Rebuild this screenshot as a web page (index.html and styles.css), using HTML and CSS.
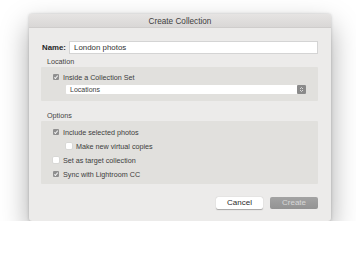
FILE: index.html
```html
<!DOCTYPE html>
<html>
<head>
<meta charset="utf-8">
<link rel="stylesheet" href="styles.css">
</head>
<body>
<div class="dialog">
  <div class="titlebar">Create Collection</div>
  <div class="content">
    <div class="name-row">
      <span class="name-label">Name:</span>
      <div class="text-input">London photos</div>
    </div>
    <div class="section-label loc-label">Location</div>
    <div class="box loc-box">
      <div class="check-row"><span class="cb checked"></span><span>Inside a Collection Set</span></div>
      <div class="select">
        <span class="select-text">Locations</span>
        <span class="stepper">
          <svg width="5" height="7" viewBox="0 0 5 7"><path d="M1 3 L2.5 1.5 L4 3 M1 4 L2.5 5.5 L4 4" fill="none" stroke="#eee" stroke-width="0.8"/></svg>
        </span>
      </div>
    </div>
    <div class="section-label opt-label">Options</div>
    <div class="box opt-box">
      <div class="check-row"><span class="cb checked"></span><span>Include selected photos</span></div>
      <div class="check-row indent"><span class="cb"></span><span>Make new virtual copies</span></div>
      <div class="check-row"><span class="cb"></span><span>Set as target collection</span></div>
      <div class="check-row"><span class="cb checked"></span><span>Sync with Lightroom CC</span></div>
    </div>
    <div class="buttons">
      <div class="btn cancel">Cancel</div>
      <div class="btn create">Create</div>
    </div>
  </div>
</div>
</body>
</html>
```
FILE: styles.css
```css
html, body {
  margin: 0;
  padding: 0;
  background: #ffffff;
}
body {
  font-family: "Liberation Sans", Arial, sans-serif;
  color: #3c3c3c;
  padding-top: 14px;
  padding-left: 29px;
}
.dialog {
  width: 302px;
  background: #ecebea;
  border-radius: 3px;
  box-shadow: 0 12px 28px rgba(0,0,0,0.34), 0 0 3px rgba(0,0,0,0.22);
  overflow: hidden;
}
.titlebar {
  height: 14px;
  line-height: 15px;
  text-align: center;
  font-size: 8.2px;
  color: #404040;
  background: linear-gradient(#e6e4e3, #d9d7d6);
  border-bottom: 1px solid #cfcdcc;
  box-sizing: border-box;
}
.content {
  padding: 13px 13px 12px 12px;
  font-size: 7.2px;
}
.name-row {
  display: flex;
  align-items: center;
  height: 13px;
}
.name-label {
  font-weight: bold;
  font-size: 7.8px;
  color: #262626;
  width: 27px;
  padding-left: 1px;
}
.text-input {
  flex: 1;
  height: 13px;
  box-sizing: border-box;
  background: #fff;
  border: 1px solid #d4d4d4;
  font-size: 7.9px;
  line-height: 11px;
  padding-left: 4px;
  color: #333;
}
.section-label {
  padding-left: 6px;
  color: #444;
}
.loc-label {
  height: 13px;
  line-height: 15px;
}
.opt-label {
  margin-top: 11px;
  height: 9px;
  line-height: 8px;
}
.box {
  background: #e1e0dd;
  border-radius: 1px;
  padding-left: 12px;
}
.loc-box {
  height: 34px;
  box-sizing: border-box;
  padding-top: 7px;
  padding-right: 12px;
}
.opt-box {
  height: 63px;
  box-sizing: border-box;
  padding-top: 4px;
}
.check-row {
  display: flex;
  align-items: center;
  height: 14px;
  gap: 4px;
}
.loc-box .check-row {
  height: 6px;
}
.check-row.indent {
  padding-left: 13px;
}
.cb {
  width: 6px;
  height: 6px;
  border-radius: 1px;
  background: #fff;
  box-shadow: 0 0 0 0.5px #cfcfcf;
  position: relative;
  flex: none;
}
.cb.checked {
  background: #8f8f8f;
  box-shadow: none;
}
.cb.checked::after {
  content: "";
  position: absolute;
  left: 2px;
  top: 0.5px;
  width: 1.3px;
  height: 3px;
  border-right: 1px solid #f4f4f4;
  border-bottom: 1px solid #f4f4f4;
  transform: rotate(40deg);
}
.select {
  margin-top: 5px;
  margin-left: 13px;
  height: 9px;
  display: flex;
  align-items: stretch;
  background: #fff;
  border-radius: 1px;
}
.select-text {
  flex: 1;
  line-height: 9px;
  padding-left: 4px;
  font-size: 7px;
}
.stepper {
  width: 9px;
  background: #8a8a8a;
  border-radius: 1px;
  display: flex;
  align-items: center;
  justify-content: center;
}
.buttons {
  display: flex;
  justify-content: flex-end;
  gap: 7px;
  margin-top: 13px;
}
.btn {
  width: 48px;
  height: 12px;
  line-height: 12px;
  text-align: center;
  font-size: 8px;
  border-radius: 2px;
  box-sizing: border-box;
}
.cancel {
  width: 47px;
  background: #fff;
  color: #2a2a2a;
  box-shadow: 0 0.5px 1px rgba(0,0,0,0.3);
}
.create {
  background: linear-gradient(#a3a3a3, #939393);
  color: #d8d8d8;
}
```
